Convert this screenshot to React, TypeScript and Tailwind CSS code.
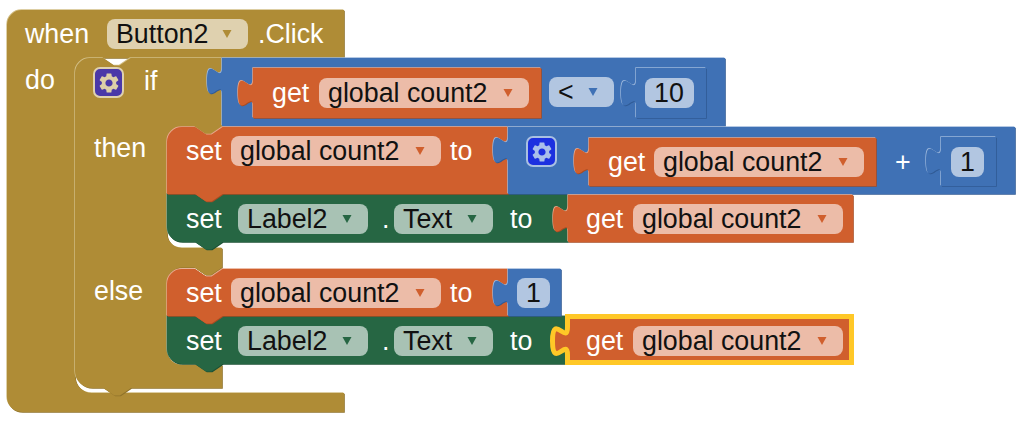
import React from "react";
import { MdSettings } from "react-icons/md";

const font = { fontFamily: '"Liberation Sans", Arial, sans-serif' };

const NOTCH_R = "l11 7.5 5.6 0 11 -7.5";
const NOTCH_L = "l-11 7.5 -5.6 0 -11 -7.5";
const TAB_UP = "c0 -18 -15 15 -15 -14 s15 5 15 -14";

function Shape({ d, fill, light, dark }: { d: string; fill: string; light: string; dark: string }) {
  return (
    <g>
      <path d={d} fill={light} transform="translate(-0.7 -0.7)" />
      <path d={d} fill={dark} transform="translate(0.8 0.8)" />
      <path d={d} fill={fill} />
    </g>
  );
}

const MUSTARD = { fill: "#AF8C36", light: "#D2BE85", dark: "#8F722A" };
const BLUE = { fill: "#3F71B5", light: "#9DB8DC", dark: "#305A94" };
const ORANGE = { fill: "#D05F2D", light: "#E8A88C", dark: "#A84B22" };
const GREEN = { fill: "#266643", light: "#7FA48F", dark: "#1C5034" };

function Canvas() {
  return (
    <svg className="absolute left-0 top-0" width="1024" height="422" viewBox="0 0 1024 422">
      {/* when Button2.Click */}
      <Shape
        {...MUSTARD}
        d="M7 25 A15 15 0 0 1 22 10 H344 V58 H90 A15 15 0 0 0 75 73 V376 A17 17 0 0 0 92 393 H344 V412 H22 A15 15 0 0 1 7 397 Z"
      />
      {/* if / then / else */}
      <Shape
        {...MUSTARD}
        d={`M75 73 A15 15 0 0 1 90 58 H103 ${NOTCH_R} H222 V126.5 ${NOTCH_L} H182 A15 15 0 0 0 167 142 V233 A15 15 0 0 0 182 248 H222 V267.5 ${NOTCH_L} H182 A15 15 0 0 0 167 283 V350 A15 15 0 0 0 182 365 H222 V388 H131 ${NOTCH_L} H92 A17 17 0 0 1 75 371 Z`}
      />
      {/* comparison */}
      <Shape {...BLUE} d={`M222 58 H725 V126 H222 V95 ${TAB_UP} Z`} />
      <Shape {...ORANGE} d={`M253 68 H541 V118 H253 V107 ${TAB_UP} Z`} />
      <Shape {...BLUE} d={`M636 68 H706 V118 H636 V107 ${TAB_UP} Z`} />
      {/* then branch */}
      <Shape {...GREEN} d={`M167 194 H568 V242 H222.6 ${NOTCH_L} H182 A15 15 0 0 1 167 227 Z`} />
      <Shape {...ORANGE} d={`M167 142 A15 15 0 0 1 182 127 H195 ${NOTCH_R} H508 V194 H222.6 ${NOTCH_L} H167 Z`} />
      <Shape {...BLUE} d={`M508 127 H1015 V194 H508 V164 ${TAB_UP} Z`} />
      <Shape {...ORANGE} d={`M589 138 H876 V186 H589 V175 ${TAB_UP} Z`} />
      <Shape {...BLUE} d={`M941 137 H996 V186 H941 V175 ${TAB_UP} Z`} />
      <Shape {...ORANGE} d={`M568 195 H853 V242 H568 V233 ${TAB_UP} Z`} />
      {/* else branch */}
      <Shape {...GREEN} d={`M167 316 H568 V364 H222.6 ${NOTCH_L} H182 A15 15 0 0 1 167 349 Z`} />
      <Shape {...ORANGE} d={`M167 284 A15 15 0 0 1 182 269 H195 ${NOTCH_R} H508 V316 H222.6 ${NOTCH_L} H167 Z`} />
      <Shape {...BLUE} d={`M508 269 H561 V316 H508 V307 ${TAB_UP} Z`} />
      {/* selected block */}
      <path
        d={`M567.5 316.5 H851.5 V362.5 H567.5 V355 ${TAB_UP} Z`}
        fill="#D05F2D"
        stroke="#FFC827"
        strokeWidth="5"
      />
    </svg>
  );
}

function Row({ className, children }: { className: string; children: React.ReactNode }) {
  return <div className={`absolute flex h-[30px] items-center ${className}`}>{children}</div>;
}

function Word({ className = "", children }: { className?: string; children: React.ReactNode }) {
  return <span className={`whitespace-pre text-[26.8px] leading-[30px] text-white ${className}`}>{children}</span>;
}

function Chip({
  className,
  arrow,
  children,
}: {
  className: string;
  arrow?: string;
  children: React.ReactNode;
}) {
  return (
    <div className={`flex h-[30px] items-center justify-between rounded-[8px] pl-[9px] pr-[16px] ${className}`}>
      <span className="whitespace-pre text-[26.8px] leading-[30px] text-[#111111]">{children}</span>
      {arrow && (
        <svg width="10" height="8" viewBox="0 0 10 8" className={arrow}>
          <path d="M0.5 0 H9.5 L5 8 Z" />
        </svg>
      )}
    </div>
  );
}

const orangeChip = "bg-[#ECBCA8]";
const greenChip = "bg-[#A8C2B4]";
const blueChip = "bg-[#B2C6E1]";

function GetChip() {
  return (
    <Chip className={`w-[210px] ${orangeChip}`} arrow="fill-[#D05F2D]">
      global count2
    </Chip>
  );
}

function GreenSet({ top }: { top: string }) {
  return (
    <Row className={`left-[186px] ${top}`}>
      <Word className="w-[52px]">set</Word>
      <Chip className={`w-[130px] ${greenChip}`} arrow="fill-[#266643]">
        Label2
      </Chip>
      <Word className="ml-[14px] w-[12px]">.</Word>
      <Chip className={`w-[99px] ${greenChip}`} arrow="fill-[#266643]">
        Text
      </Chip>
      <Word className="ml-[17px] w-[76px]">to</Word>
      <Word className="w-[47px]">get</Word>
      <GetChip />
    </Row>
  );
}

function OrangeSet({ top }: { top: string }) {
  return (
    <Row className={`left-[186px] ${top}`}>
      <Word className="w-[45px]">set</Word>
      <GetChip />
      <Word className="ml-[9px]">to</Word>
    </Row>
  );
}

function Gear({ className, iconClass }: { className: string; iconClass: string }) {
  return (
    <div className={`absolute flex h-[31px] w-[31px] items-center justify-center rounded-[7px] border-2 ${className}`}>
      <MdSettings size={24} className={iconClass} />
    </div>
  );
}

export default function App() {
  return (
    <div className="relative h-[422px] w-[1024px] overflow-hidden bg-white" style={font}>
      <Canvas />

      <Row className="left-[25px] top-[19px]">
        <Word className="w-[82px]">when</Word>
        <Chip className="w-[141px] bg-[#DFD1AF]" arrow="fill-[#AF8C36]">
          Button2
        </Chip>
        <Word className="ml-[10px]">.Click</Word>
      </Row>

      <Row className="left-[25px] top-[65px]">
        <Word>do</Word>
      </Row>
      <Gear className="left-[93px] top-[67px] border-[#DFD1AF] bg-[#4A38A8]" iconClass="text-[#DCCFA8]" />
      <Row className="left-[144px] top-[66px]">
        <Word>if</Word>
      </Row>

      <Row className="left-[272px] top-[78px]">
        <Word className="w-[47px]">get</Word>
        <GetChip />
      </Row>
      <Row className="left-[549px] top-[77px]">
        <Chip className={`w-[65px] ${blueChip}`} arrow="fill-[#3F71B5]">
          &lt;
        </Chip>
      </Row>
      <Row className="left-[645px] top-[78px]">
        <Chip className={`w-[49px] ${blueChip}`}>10</Chip>
      </Row>

      <Row className="left-[94px] top-[133px]">
        <Word>then</Word>
      </Row>
      <OrangeSet top="top-[136px]" />
      <Gear className="left-[526px] top-[136px] border-[#A9C0E2] bg-[#1C30E0]" iconClass="text-[#A9BFEA]" />
      <Row className="left-[608px] top-[147px]">
        <Word className="w-[46px]">get</Word>
        <GetChip />
        <Word className="ml-[31px]">+</Word>
      </Row>
      <Row className="left-[951px] top-[147px]">
        <Chip className={`w-[33px] ${blueChip}`}>1</Chip>
      </Row>

      <GreenSet top="top-[204px]" />

      <Row className="left-[94px] top-[276px]">
        <Word>else</Word>
      </Row>
      <OrangeSet top="top-[278px]" />
      <Row className="left-[517px] top-[278px]">
        <Chip className={`w-[33px] ${blueChip}`}>1</Chip>
      </Row>

      <GreenSet top="top-[326px]" />
    </div>
  );
}
